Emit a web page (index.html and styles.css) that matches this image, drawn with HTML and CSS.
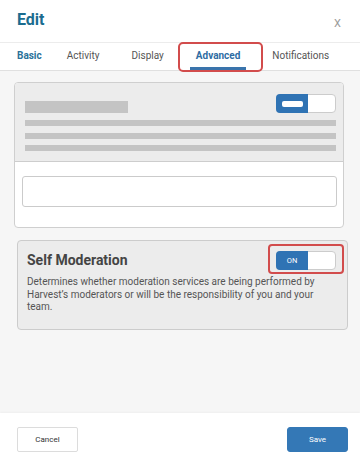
FILE: index.html
```html
<!DOCTYPE html>
<html lang="en">
<head>
<meta charset="utf-8">
<title>Edit</title>
<link rel="stylesheet" href="styles.css">
</head>
<body>
<div class="modal">
  <header class="modal-header">
    <h1 class="modal-title">Edit</h1>
    <span class="modal-close">X</span>
  </header>
  <nav class="tabs">
    <span class="tab tab-basic">Basic</span>
    <span class="tab">Activity</span>
    <span class="tab">Display</span>
    <span class="tab tab-active">Advanced</span>
    <span class="tab">Notifications</span>
  </nav>
  <main class="content">
    <section class="card">
      <div class="card-top">
        <div class="card-row">
          <div class="skel-title"></div>
          <div class="toggle">
            <div class="toggle-on"><span class="toggle-bar"></span></div>
          </div>
        </div>
        <div class="skel-lines">
          <div class="skel-line"></div>
          <div class="skel-line"></div>
          <div class="skel-line"></div>
        </div>
      </div>
      <div class="card-bottom">
        <div class="input-box"></div>
      </div>
    </section>
    <section class="setting">
      <div class="setting-row">
        <h2 class="setting-title">Self Moderation</h2>
        <div class="toggle toggle-highlight">
          <div class="toggle-on"><span class="toggle-text">ON</span></div>
        </div>
      </div>
      <p class="setting-desc">Determines whether moderation services are being performed by Harvest’s moderators or will be the responsibility of you and your team.</p>
    </section>
  </main>
  <footer class="modal-footer">
    <button class="btn btn-cancel">Cancel</button>
    <button class="btn btn-save">Save</button>
  </footer>
</div>
</body>
</html>
```
FILE: styles.css
```css
* { box-sizing: border-box; }
html, body { margin: 0; padding: 0; }
body {
  width: 360px;
  height: 459px;
  font-family: Roboto, "Liberation Sans", sans-serif;
  background: #f6f6f6;
  overflow: hidden;
}
.modal {
  display: flex;
  flex-direction: column;
  height: 459px;
}
.modal-header {
  height: 42px;
  background: #fff;
  display: flex;
  justify-content: space-between;
  align-items: flex-start;
  padding: 0 19px 0 17px;
}
.modal-title {
  margin: 10px 0 0;
  font-size: 16px;
  font-weight: 700;
  color: #1b6c8f;
  line-height: 20px;
}
.modal-close {
  margin-top: 17px;
  font-size: 11px;
  color: #9a9a9a;
  line-height: 14px;
}
.tabs {
  height: 29px;
  background: #fff;
  border-top: 1px solid #ececec;
  border-bottom: 1px solid #e0e0e0;
  display: flex;
  align-items: stretch;
  gap: 32px;
  padding-left: 17px;
}
.tab {
  font-size: 10px;
  color: #555;
  line-height: 24px;
  padding-top: 1px;
}
.tab-basic {
  font-weight: 700;
  color: #2a7199;
  margin-right: -7px;
}
.tab-active {
  position: relative;
  font-weight: 700;
  color: #2e6ca3;
  padding: 1px 6px 0;
  margin: 0 -6px;
  border-bottom: 3px solid #3a74ac;
}
.tab-active::after {
  content: "";
  position: absolute;
  left: -12px;
  right: -17px;
  top: -1px;
  bottom: -5px;
  border: 2px solid #d24c4c;
  border-radius: 5px;
}
.content {
  flex: 1;
  padding: 11px 16px 0 14px;
}
.card {
  border: 1px solid #cfcfcf;
  border-radius: 4px;
  background: #fff;
  overflow: hidden;
}
.card-top {
  background: #ececec;
  border-bottom: 1px solid #cdcdcd;
  padding: 11px 7px 10px 10px;
}
.card-row {
  display: flex;
  justify-content: space-between;
  align-items: flex-end;
}
.skel-title {
  width: 103px;
  height: 12px;
  background: #c4c4c4;
}
.skel-lines {
  display: flex;
  flex-direction: column;
  gap: 6.5px;
  margin-top: 7px;
}
.skel-line {
  height: 6px;
  background: #c4c4c4;
}
.toggle {
  width: 60px;
  height: 19px;
  background: #fff;
  border: 1px solid #cccccc;
  border-radius: 4px;
  position: relative;
  flex: none;
}
.toggle-on {
  position: absolute;
  left: -1px;
  top: -1px;
  width: 32px;
  height: 19px;
  background: #2f73b4;
  border-radius: 4px 0 0 4px;
  display: flex;
  align-items: center;
  justify-content: center;
}
.toggle-bar {
  width: 21px;
  height: 6px;
  background: #fff;
  border-radius: 2px;
}
.toggle-text {
  color: #fff;
  font-size: 7.5px;
  line-height: 8px;
}
.card-bottom {
  padding: 14px 6px 20px 7px;
}
.input-box {
  height: 31px;
  border: 1px solid #cbcbcb;
  border-radius: 3px;
  background: #fff;
}
.setting {
  margin: 12px -4px 0 3px;
  background: #ececec;
  border: 1px solid #cccccc;
  border-radius: 4px;
  padding: 10px 11px 15px 9px;
}
.setting-row {
  display: flex;
  justify-content: space-between;
  align-items: center;
}
.setting-title {
  margin: 0;
  font-size: 14px;
  font-weight: 700;
  color: #444;
  line-height: 19px;
}
.toggle-highlight::after {
  content: "";
  position: absolute;
  left: -9px;
  right: -9px;
  top: -8px;
  bottom: -5px;
  border: 2px solid #d24c4c;
  border-radius: 4px;
}
.setting-desc {
  margin: 6px 0 0;
  font-size: 10px;
  line-height: 12.5px;
  color: #555;
}
.modal-footer {
  height: 46px;
  background: #fff;
  display: flex;
  justify-content: space-between;
  align-items: flex-start;
  padding: 14px 12px 0 17px;
  box-shadow: 0 -1px 2px rgba(0,0,0,0.03);
}
.btn {
  width: 61px;
  height: 25px;
  font-family: Roboto, "Liberation Sans", sans-serif;
  font-size: 8px;
  border-radius: 2px;
  padding: 0;
  cursor: pointer;
}
.btn-cancel {
  background: #fff;
  color: #333;
  border: 1px solid #dcdcdc;
}
.btn-save {
  background: #3478b6;
  color: #fff;
  border: 1px solid #3478b6;
  border-radius: 3px;
}
```
